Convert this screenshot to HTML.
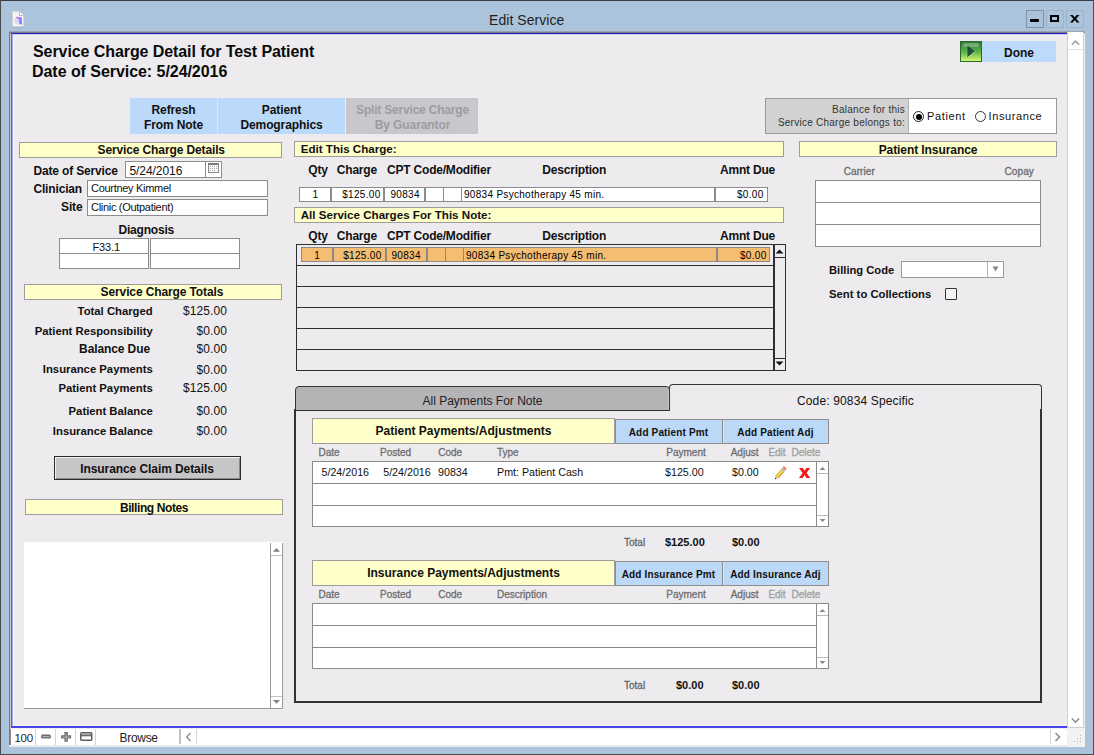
<!DOCTYPE html>
<html><head><meta charset="utf-8">
<style>
*{margin:0;padding:0;box-sizing:border-box}
html,body{width:1094px;height:755px;overflow:hidden;background:#abc4dc;font-family:"Liberation Sans",sans-serif;color:#000;position:relative}
.a{position:absolute}
.t{position:absolute;white-space:nowrap;line-height:1}
svg{position:absolute;overflow:visible}
</style></head><body>
<div class="a" style="left:0px;top:0px;width:1094px;height:1px;background:#3c3c3c"></div>
<div class="a" style="left:0px;top:0px;width:1px;height:755px;background:#4a4a4a"></div>
<div class="a" style="left:1093px;top:0px;width:1px;height:755px;background:#4a4a4a"></div>
<div class="a" style="left:0px;top:754px;width:1094px;height:1px;background:#4a4a4a"></div>
<svg style="left:12px;top:11px" width="12" height="17" viewBox="0 0 12 17"><rect x="0" y="15.2" width="12" height="1.3" fill="#8090a0" opacity="0.55"/><path d="M0.5 0.5 H7.5 L11.5 4.5 V15.5 H0.5 Z" fill="#f3f3f3" stroke="#d4d4d4"/><path d="M7.5 0.5 V4.5 H11.5" fill="#ffffff" stroke="#b8b8b8"/><path d="M4 5.8 L9.8 6.5 L9.9 9.5 L5 9 Z" fill="#b46cf2"/><path d="M5 9 L9.9 9.5 L10 13.5 L6 13 Z" fill="#7a80f4"/><path d="M1.8 7 L6.5 7.8 L7.8 13.4 L3.2 12.8 Z" fill="#d8dcf8"/></svg>
<div class="t" style="top:13.15px;font-size:14px;color:#1e1e1e;letter-spacing:0.05px;left:489px;">Edit Service</div>
<div class="a" style="left:1026px;top:10px;width:18px;height:18px;border:1px solid #7f93a8;background:#a9c2da"></div>
<div class="a" style="left:1046px;top:10px;width:18px;height:18px;border:1px solid #9db3c9;background:#abc4dc"></div>
<div class="a" style="left:1066px;top:10px;width:18px;height:18px;border:1px solid #9db3c9;background:#abc4dc"></div>
<div class="a" style="left:1030px;top:19.3px;width:9px;height:2.8px;background:#000;border-radius:1px"></div>
<div class="a" style="left:1050px;top:15px;width:9px;height:7px;border:2px solid #000"></div>
<svg style="left:1069.5px;top:15px" width="9.5" height="7.5" viewBox="0 0 9.5 7.5"><path d="M0 0 H2.7 L4.75 2.3 L6.8 0 H9.5 L6.1 3.7 L9.5 7.5 H6.8 L4.75 5.1 L2.7 7.5 H0 L3.4 3.7 Z" fill="#000"/></svg>
<div class="a" style="left:9px;top:31px;width:1076px;height:716px;background:#f0f0f0;border-top:1px solid #9aa4ae"></div>
<div class="a" style="left:9px;top:32px;width:1076px;height:1px;background:#787878"></div>
<div class="a" style="left:9px;top:32px;width:1px;height:714px;background:#7a7a7a"></div>
<div class="a" style="left:10px;top:33px;width:1px;height:695px;background:#c8c8c8"></div>
<div class="a" style="left:11px;top:33px;width:1056px;height:695px;background:#edebee"></div>
<div class="a" style="left:11px;top:33px;width:1056px;height:1px;background:#2626c8"></div>
<div class="a" style="left:12px;top:34px;width:1055px;height:1px;background:#c4c4f0"></div>
<div class="a" style="left:13px;top:35px;width:1054px;height:1px;background:#f8f5ee"></div>
<div class="a" style="left:11px;top:34px;width:1px;height:693px;background:#5a5aff"></div>
<div class="a" style="left:12px;top:35px;width:1px;height:691px;background:#a8a8fa"></div>
<div class="a" style="left:13px;top:35px;width:1px;height:690px;background:#f8f5ee"></div>
<div class="a" style="left:13px;top:725px;width:1054px;height:1px;background:#f6f3ec"></div>
<div class="a" style="left:11px;top:726px;width:1056px;height:1.6px;background:#4444ea"></div>
<div class="a" style="left:1067px;top:32px;width:17px;height:696px;background:#fff;border-left:1px solid #cfcfcf;border-right:1px solid #cfcfcf;border-bottom:1px solid #cfcfcf"></div>
<div class="a" style="left:1068px;top:49px;width:15px;height:1px;background:#e2e2e2"></div>
<svg style="left:1071px;top:39px" width="9" height="7" viewBox="0 0 9 7"><path d="M0.8 5.8 L4.5 2 L8.2 5.8" fill="none" stroke="#9a9a9a" stroke-width="1.4"/></svg>
<svg style="left:1071px;top:716.5px" width="9" height="7" viewBox="0 0 9 7"><path d="M0.8 1.5 L4.5 5.3 L8.2 1.5" fill="none" stroke="#8a8a8a" stroke-width="1.4"/></svg>
<div class="a" style="left:10px;top:728.5px;width:1057px;height:16.5px;background:#fff;border-left:1px solid #8a8a8a"></div>
<div class="a" style="left:9px;top:745px;width:1076px;height:2px;background:#e8eaec"></div>
<div class="t" style="top:733.27px;font-size:11.5px;color:#222;letter-spacing:-0.3px;left:14.5px;">100</div>
<div class="a" style="left:35px;top:728.5px;width:1.2px;height:16px;background:#d4d4d4"></div>
<div class="a" style="left:55px;top:728.5px;width:1.2px;height:16px;background:#d4d4d4"></div>
<div class="a" style="left:75px;top:728.5px;width:1.2px;height:16px;background:#d4d4d4"></div>
<div class="a" style="left:95px;top:728.5px;width:1.2px;height:16px;background:#d4d4d4"></div>
<svg style="left:41px;top:734px" width="10" height="5" viewBox="0 0 10 5"><rect x="0.2" y="0.6" width="9.6" height="4" rx="1.4" fill="#6e6e6e"/><rect x="1.8" y="2" width="6.4" height="1.1" fill="#b4b4b4"/></svg>
<svg style="left:61px;top:732px" width="11" height="10" viewBox="0 0 11 10"><path d="M3.4 0 H6.8 V3.2 H10.1 V6.6 H6.8 V9.8 H3.4 V6.6 H0.1 V3.2 H3.4 Z" fill="#6e6e6e"/><path d="M4.6 1.4 H5.6 V4.4 H8.7 V5.4 H5.6 V8.4 H4.6 V5.4 H1.5 V4.4 H4.6 Z" fill="#b0b0b0"/></svg>
<svg style="left:80px;top:732px" width="12.5" height="9" viewBox="0 0 12.5 9"><rect x="0.75" y="0.75" width="11" height="7.5" rx="1" fill="#fff" stroke="#5c5c5c" stroke-width="1.5"/><rect x="1.5" y="1.5" width="9.5" height="1.6" fill="#9a9a9a"/><rect x="1" y="3.1" width="10.5" height="1.2" fill="#5c5c5c"/></svg>
<div class="t" style="top:731.84px;font-size:12px;color:#222;letter-spacing:-0.3px;left:119.5px;">Browse</div>
<div class="a" style="left:179px;top:729px;width:2px;height:15px;background:#c0c0c0"></div>
<svg style="left:185px;top:732px" width="7" height="10" viewBox="0 0 7 10"><path d="M5.5 1 L1.7 5 L5.5 9" fill="none" stroke="#8a8a8a" stroke-width="1.3"/></svg>
<div class="a" style="left:196px;top:729px;width:1px;height:15px;background:#d6d6d6"></div>
<div class="a" style="left:1050px;top:729px;width:1px;height:15px;background:#d6d6d6"></div>
<svg style="left:1054px;top:732px" width="8" height="10" viewBox="0 0 8 10"><path d="M1.5 1 L5.5 5 L1.5 9" fill="none" stroke="#8a8a8a" stroke-width="1.5"/></svg>
<div class="a" style="left:1067px;top:728px;width:18px;height:19px;background:#f2f2f2"></div>
<div class="a" style="left:1080px;top:735px;width:1.2px;height:1.2px;background:#b4b4b4"></div>
<div class="a" style="left:1077px;top:738px;width:1.2px;height:1.2px;background:#b4b4b4"></div>
<div class="a" style="left:1080px;top:738px;width:1.2px;height:1.2px;background:#b4b4b4"></div>
<div class="a" style="left:1074px;top:741px;width:1.2px;height:1.2px;background:#b4b4b4"></div>
<div class="a" style="left:1077px;top:741px;width:1.2px;height:1.2px;background:#b4b4b4"></div>
<div class="a" style="left:1080px;top:741px;width:1.2px;height:1.2px;background:#b4b4b4"></div>
<div class="t" style="top:44.46px;font-size:16px;color:#0a0a0a;font-weight:bold;letter-spacing:-0.08px;left:33px;">Service Charge Detail for Test Patient</div>
<div class="t" style="top:64.46px;font-size:16px;color:#0a0a0a;font-weight:bold;letter-spacing:-0.05px;left:32px;">Date of Service: 5/24/2016</div>
<div class="a" style="left:960px;top:41px;width:22px;height:21px;background:linear-gradient(#2a7a36,#62b848 55%,#d8f870);border:1px solid #2a6a30"></div>
<div class="a" style="left:963px;top:43px;width:16px;height:4px;background:#fff;opacity:0.3;border-radius:2px"></div>
<svg style="left:960px;top:41px" width="22" height="21" viewBox="0 0 22 21"><path d="M7.5 4.5 L15 10.5 L7.5 16.5 Z" fill="#1f4d3e"/><path d="M7.8 16.3 L15 10.7" stroke="#e8ffe0" stroke-width="0.8" opacity="0.8"/></svg>
<div class="a" style="left:982px;top:41px;width:74px;height:21px;background:#bcdaf9"></div>
<div class="t" style="top:46.84px;font-size:12px;color:#111;font-weight:bold;left:719px;width:600px;text-align:center;">Done</div>
<div class="a" style="left:130px;top:98px;width:87px;height:36px;background:#bbd9f8"></div>
<div class="a" style="left:217px;top:98px;width:1px;height:36px;background:#dde8f2"></div>
<div class="a" style="left:218px;top:98px;width:127px;height:36px;background:#bbd9f8"></div>
<div class="a" style="left:346px;top:98px;width:132px;height:36px;background:#c9c7cb"></div>
<div class="t" style="top:104.14px;font-size:12px;color:#111;font-weight:bold;letter-spacing:-0.1px;left:-126.5px;width:600px;text-align:center;">Refresh</div>
<div class="t" style="top:118.74px;font-size:12px;color:#111;font-weight:bold;letter-spacing:-0.1px;left:-126.5px;width:600px;text-align:center;">From Note</div>
<div class="t" style="top:104.14px;font-size:12px;color:#111;font-weight:bold;letter-spacing:-0.1px;left:-18.5px;width:600px;text-align:center;">Patient</div>
<div class="t" style="top:118.74px;font-size:12px;color:#111;font-weight:bold;letter-spacing:-0.1px;left:-18.5px;width:600px;text-align:center;">Demographics</div>
<div class="t" style="top:104.14px;font-size:12px;color:#9d9ca3;font-weight:bold;letter-spacing:-0.2px;left:112.5px;width:600px;text-align:center;">Split Service Charge</div>
<div class="t" style="top:118.74px;font-size:12px;color:#9d9ca3;font-weight:bold;letter-spacing:-0.1px;left:112.5px;width:600px;text-align:center;">By Guarantor</div>
<div class="a" style="left:765px;top:98px;width:292px;height:36px;background:#fff;border:1px solid #9a9a9a"></div>
<div class="a" style="left:766px;top:99px;width:143px;height:34px;background:#d2d2d2;border-right:1px solid #b0b0b0"></div>
<div class="t" style="top:105.03px;font-size:10px;color:#333;letter-spacing:0.25px;right:189px;">Balance for this</div>
<div class="t" style="top:118.03px;font-size:10px;color:#333;letter-spacing:0.25px;right:189px;">Service Charge belongs to:</div>
<div class="a" style="left:913px;top:111px;width:11px;height:11px;border:1px solid #222;border-radius:50%;background:#fff"></div>
<div class="a" style="left:915.5px;top:113.5px;width:6px;height:6px;border-radius:50%;background:#000"></div>
<div class="t" style="top:111.19px;font-size:11px;color:#111;letter-spacing:0.65px;left:927px;">Patient</div>
<div class="a" style="left:975px;top:111px;width:11px;height:11px;border:1px solid #333;border-radius:50%;background:#fff"></div>
<div class="t" style="top:111.19px;font-size:11px;color:#111;letter-spacing:0.6px;left:988.6px;">Insurance</div>
<div class="a" style="left:19px;top:142px;width:263px;height:16px;background:#ffffc9;border:1px solid #9d9d9d;"></div>
<div class="t" style="top:144.44px;font-size:12px;color:#111;font-weight:bold;letter-spacing:-0.12px;left:97.5px;">Service Charge Details</div>
<div class="t" style="top:164.84px;font-size:12px;color:#111;font-weight:bold;letter-spacing:-0.15px;left:33.4px;">Date of Service</div>
<div class="a" style="left:125px;top:161px;width:81px;height:17px;background:#fff;border:1px solid #8c8c8c"></div>
<div class="t" style="top:164.84px;font-size:12px;color:#111;letter-spacing:-0.05px;left:129.4px;">5/24/2016</div>
<div class="a" style="left:205px;top:161px;width:17px;height:17px;background:#fff;border:1px solid #8c8c8c"></div>
<svg style="left:208px;top:163px" width="11" height="10" viewBox="0 0 11 10"><rect x="0.5" y="0.5" width="10" height="9" fill="#f8f8f8" stroke="#8a8a8a"/><rect x="0" y="0" width="11" height="2" fill="#7a7a7a"/><rect x="2" y="3" width="1" height="1" fill="#a8a8a8"/><rect x="4" y="3" width="1" height="1" fill="#a8a8a8"/><rect x="6" y="3" width="1" height="1" fill="#a8a8a8"/><rect x="8" y="3" width="1" height="1" fill="#a8a8a8"/><rect x="2" y="5" width="1" height="1" fill="#a8a8a8"/><rect x="4" y="5" width="1" height="1" fill="#a8a8a8"/><rect x="6" y="5" width="1" height="1" fill="#a8a8a8"/><rect x="8" y="5" width="1" height="1" fill="#a8a8a8"/><rect x="2" y="7" width="1" height="1" fill="#a8a8a8"/><rect x="4" y="7" width="1" height="1" fill="#a8a8a8"/><rect x="6" y="7" width="1" height="1" fill="#a8a8a8"/></svg>
<div class="t" style="top:182.84px;font-size:12px;color:#111;font-weight:bold;letter-spacing:-0.15px;left:33.4px;">Clinician</div>
<div class="a" style="left:87px;top:180px;width:181px;height:17px;background:#fff;border:1px solid #8c8c8c"></div>
<div class="t" style="top:183.19px;font-size:11px;color:#111;letter-spacing:-0.3px;left:91px;">Courtney Kimmel</div>
<div class="t" style="top:201.34px;font-size:12px;color:#111;font-weight:bold;letter-spacing:-0.15px;right:1011.5px;">Site</div>
<div class="a" style="left:87px;top:199px;width:181px;height:17px;background:#fff;border:1px solid #8c8c8c"></div>
<div class="t" style="top:202.19px;font-size:11px;color:#111;letter-spacing:-0.3px;left:91px;">Clinic (Outpatient)</div>
<div class="t" style="top:224.34px;font-size:12px;color:#111;font-weight:bold;letter-spacing:-0.2px;left:118.5px;">Diagnosis</div>
<div class="a" style="left:59px;top:238px;width:90px;height:16px;background:#fff;border:1px solid #8c8c8c"></div>
<div class="a" style="left:150px;top:238px;width:90px;height:16px;background:#fff;border:1px solid #8c8c8c"></div>
<div class="a" style="left:59px;top:253px;width:90px;height:16px;background:#fff;border:1px solid #8c8c8c"></div>
<div class="a" style="left:150px;top:253px;width:90px;height:16px;background:#fff;border:1px solid #8c8c8c"></div>
<div class="t" style="top:241.69px;font-size:11px;color:#111;letter-spacing:-0.1px;left:92.4px;">F33.1</div>
<div class="a" style="left:24px;top:284px;width:258px;height:16px;background:#ffffc9;border:1px solid #9d9d9d;"></div>
<div class="t" style="top:286.34px;font-size:12px;color:#111;font-weight:bold;letter-spacing:-0.12px;left:100.6px;">Service Charge Totals</div>
<div class="t" style="top:305.93px;font-size:11.3px;color:#111;font-weight:bold;right:941.3px;">Total Charged</div>
<div class="t" style="top:305.34px;font-size:12px;color:#111;letter-spacing:0.1px;right:867px;">$125.00</div>
<div class="t" style="top:325.73px;font-size:11.3px;color:#111;font-weight:bold;right:941.3px;">Patient Responsibility</div>
<div class="t" style="top:325.14px;font-size:12px;color:#111;letter-spacing:0.1px;right:867px;">$0.00</div>
<div class="t" style="top:343.44px;font-size:12px;color:#111;font-weight:bold;letter-spacing:-0.1px;right:944px;">Balance Due</div>
<div class="t" style="top:343.44px;font-size:12px;color:#111;letter-spacing:0.1px;right:867px;">$0.00</div>
<div class="t" style="top:364.43px;font-size:11.3px;color:#111;font-weight:bold;right:941.3px;">Insurance Payments</div>
<div class="t" style="top:363.84px;font-size:12px;color:#111;letter-spacing:0.1px;right:867px;">$0.00</div>
<div class="t" style="top:382.93px;font-size:11.3px;color:#111;font-weight:bold;right:941.3px;">Patient Payments</div>
<div class="t" style="top:382.34px;font-size:12px;color:#111;letter-spacing:0.1px;right:867px;">$125.00</div>
<div class="t" style="top:405.73px;font-size:11.3px;color:#111;font-weight:bold;right:941.3px;">Patient Balance</div>
<div class="t" style="top:405.14px;font-size:12px;color:#111;letter-spacing:0.1px;right:867px;">$0.00</div>
<div class="t" style="top:425.63px;font-size:11.3px;color:#111;font-weight:bold;right:941.3px;">Insurance Balance</div>
<div class="t" style="top:425.04px;font-size:12px;color:#111;letter-spacing:0.1px;right:867px;">$0.00</div>
<div class="a" style="left:54px;top:456px;width:187px;height:24px;background:#c6c5c7;border:1px solid #2a2a2a;box-shadow:inset 1px 1px 0 #f4f4f4, inset -1px -1px 0 #8a8a8a"></div>
<div class="t" style="top:462.84px;font-size:12px;color:#111;font-weight:bold;letter-spacing:-0.08px;left:-153px;width:600px;text-align:center;">Insurance Claim Details</div>
<div class="a" style="left:25px;top:499px;width:258px;height:16px;background:#ffffc9;border:1px solid #9d9d9d;"></div>
<div class="t" style="top:501.64px;font-size:12px;color:#111;font-weight:bold;letter-spacing:-0.4px;left:-146.0px;width:600px;text-align:center;">Billing Notes</div>
<div class="a" style="left:24px;top:542px;width:259px;height:167px;background:#fff;border-bottom:1px solid #9a9a9a"></div>
<div class="a" style="left:270px;top:543px;width:1px;height:166px;background:#9a9a9a"></div>
<div class="a" style="left:282px;top:543px;width:1px;height:166px;background:#9a9a9a"></div>
<div class="a" style="left:271px;top:555px;width:11px;height:1px;background:#c0c0c0"></div>
<div class="a" style="left:271px;top:696px;width:11px;height:1px;background:#c0c0c0"></div>
<svg style="left:273px;top:548px" width="7" height="4" viewBox="0 0 7 4"><path d="M0 3.8 L3.5 0 L7 3.8 Z" fill="#808080"/></svg>
<svg style="left:273px;top:700px" width="7" height="4" viewBox="0 0 7 4"><path d="M0 0 L3.5 3.8 L7 0 Z" fill="#808080"/></svg>
<div class="a" style="left:294px;top:141px;width:490px;height:16px;background:#ffffc9;border:1px solid #9d9d9d;"></div>
<div class="t" style="top:143.18px;font-size:11.6px;color:#111;font-weight:bold;left:300.7px;">Edit This Charge:</div>
<div class="t" style="top:163.64px;font-size:12px;color:#111;font-weight:bold;letter-spacing:-0.2px;left:308.3px;">Qty</div>
<div class="t" style="top:163.64px;font-size:12px;color:#111;font-weight:bold;letter-spacing:-0.2px;left:336.8px;">Charge</div>
<div class="t" style="top:163.64px;font-size:12px;color:#111;font-weight:bold;letter-spacing:-0.2px;left:387px;">CPT Code/Modifier</div>
<div class="t" style="top:163.64px;font-size:12px;color:#111;font-weight:bold;letter-spacing:-0.2px;left:542.3px;">Description</div>
<div class="t" style="top:163.64px;font-size:12px;color:#111;font-weight:bold;letter-spacing:-0.2px;left:720px;">Amnt Due</div>
<div class="a" style="left:299px;top:187px;width:32px;height:15px;background:#fff;border:1px solid #8c8c8c"></div>
<div class="a" style="left:331px;top:187px;width:53px;height:15px;background:#fff;border:1px solid #8c8c8c"></div>
<div class="a" style="left:384px;top:187px;width:41px;height:15px;background:#fff;border:1px solid #8c8c8c"></div>
<div class="a" style="left:425px;top:187px;width:19px;height:15px;background:#fff;border:1px solid #8c8c8c"></div>
<div class="a" style="left:443px;top:187px;width:19px;height:15px;background:#fff;border:1px solid #8c8c8c"></div>
<div class="a" style="left:461px;top:187px;width:254px;height:15px;background:#fff;border:1px solid #8c8c8c"></div>
<div class="a" style="left:715px;top:187px;width:53px;height:15px;background:#fff;border:1px solid #8c8c8c"></div>
<div class="t" style="top:190.34px;font-size:10px;color:#000;left:15.199999999999989px;width:600px;text-align:center;">1</div>
<div class="t" style="top:190.34px;font-size:10px;color:#000;letter-spacing:0.3px;right:713.5px;">$125.00</div>
<div class="t" style="top:190.34px;font-size:10px;color:#000;letter-spacing:0.3px;left:390.5px;">90834</div>
<div class="t" style="top:190.34px;font-size:10px;color:#000;letter-spacing:0.3px;left:464px;">90834 Psychotherapy 45 min.</div>
<div class="t" style="top:190.34px;font-size:10px;color:#000;letter-spacing:0.3px;right:330.5px;">$0.00</div>
<div class="a" style="left:294px;top:207px;width:490px;height:16px;background:#ffffc9;border:1px solid #9d9d9d;"></div>
<div class="t" style="top:209.48px;font-size:11.6px;color:#111;font-weight:bold;left:300.7px;">All Service Charges For This Note:</div>
<div class="t" style="top:229.54px;font-size:12px;color:#111;font-weight:bold;letter-spacing:-0.2px;left:308.3px;">Qty</div>
<div class="t" style="top:229.54px;font-size:12px;color:#111;font-weight:bold;letter-spacing:-0.2px;left:336.8px;">Charge</div>
<div class="t" style="top:229.54px;font-size:12px;color:#111;font-weight:bold;letter-spacing:-0.2px;left:387px;">CPT Code/Modifier</div>
<div class="t" style="top:229.54px;font-size:12px;color:#111;font-weight:bold;letter-spacing:-0.2px;left:542.3px;">Description</div>
<div class="t" style="top:229.54px;font-size:12px;color:#111;font-weight:bold;letter-spacing:-0.2px;left:720px;">Amnt Due</div>
<div class="a" style="left:296px;top:243.5px;width:490px;height:127.5px;border:1.5px solid #2f2f2f"></div>
<div class="a" style="left:297px;top:264.5px;width:477px;height:1.5px;background:#2f2f2f"></div>
<div class="a" style="left:297px;top:285.5px;width:477px;height:1.5px;background:#2f2f2f"></div>
<div class="a" style="left:297px;top:306.5px;width:477px;height:1.5px;background:#2f2f2f"></div>
<div class="a" style="left:297px;top:327.5px;width:477px;height:1.5px;background:#2f2f2f"></div>
<div class="a" style="left:297px;top:348.5px;width:477px;height:1.5px;background:#2f2f2f"></div>
<div class="a" style="left:773px;top:244px;width:1.5px;height:127px;background:#2f2f2f"></div>
<div class="a" style="left:774px;top:256.5px;width:11px;height:1.2px;background:#2f2f2f"></div>
<div class="a" style="left:774px;top:358px;width:11px;height:1.2px;background:#2f2f2f"></div>
<svg style="left:775px;top:249px" width="9" height="5" viewBox="0 0 9 5"><path d="M0.5 4.5 L4.5 0.5 L8.5 4.5 Z" fill="#111"/></svg>
<svg style="left:775px;top:361px" width="9" height="5" viewBox="0 0 9 5"><path d="M0.5 0.5 L4.5 4.5 L8.5 0.5 Z" fill="#111"/></svg>
<div class="a" style="left:301px;top:247px;width:32px;height:15px;background:#f5bd72;border:1px solid #8a8a8a"></div>
<div class="a" style="left:333px;top:247px;width:53px;height:15px;background:#f5bd72;border:1px solid #8a8a8a"></div>
<div class="a" style="left:386px;top:247px;width:41px;height:15px;background:#f5bd72;border:1px solid #8a8a8a"></div>
<div class="a" style="left:427px;top:247px;width:19px;height:15px;background:#f5bd72;border:1px solid #8a8a8a"></div>
<div class="a" style="left:445px;top:247px;width:19px;height:15px;background:#f5bd72;border:1px solid #8a8a8a"></div>
<div class="a" style="left:463px;top:247px;width:254px;height:15px;background:#f5bd72;border:1px solid #8a8a8a"></div>
<div class="a" style="left:717px;top:247px;width:53px;height:15px;background:#f5bd72;border:1px solid #8a8a8a"></div>
<div class="t" style="top:250.84px;font-size:10px;color:#000;left:17px;width:600px;text-align:center;">1</div>
<div class="t" style="top:250.84px;font-size:10px;color:#000;letter-spacing:0.3px;right:712.5px;">$125.00</div>
<div class="t" style="top:250.84px;font-size:10px;color:#000;letter-spacing:0.3px;left:391.5px;">90834</div>
<div class="t" style="top:250.84px;font-size:10px;color:#000;letter-spacing:0.3px;left:466px;">90834 Psychotherapy 45 min.</div>
<div class="t" style="top:250.84px;font-size:10px;color:#000;letter-spacing:0.3px;right:327.5px;">$0.00</div>
<div class="a" style="left:294px;top:409px;width:748px;height:294px;border:2px solid #333;border-top:none"></div>
<div class="a" style="left:294px;top:409px;width:376px;height:2px;background:#333"></div>
<div class="a" style="left:294.5px;top:386px;width:375.5px;height:25px;background:#b4b3b5;border:1.5px solid #333;border-bottom:1.5px solid #333;border-radius:4px 4px 0 0;box-shadow:inset -1px 0 0 #cacaca"></div>
<div class="a" style="left:668.5px;top:384px;width:373.5px;height:26.5px;border-top:1.2px solid #333;border-left:1.2px solid #333;border-right:1.2px solid #333;border-radius:4px 4px 0 0"></div>
<div class="t" style="top:394.84px;font-size:12px;color:#222;left:182.5px;width:600px;text-align:center;">All Payments For Note</div>
<div class="t" style="top:395.34px;font-size:12px;color:#111;letter-spacing:0.14px;left:797px;">Code: 90834 Specific</div>
<div class="a" style="left:312px;top:418px;width:303px;height:26px;background:#ffffc9;border:1px solid #9d9d9d;"></div>
<div class="t" style="top:425.04px;font-size:12px;color:#111;font-weight:bold;left:163.5px;width:600px;text-align:center;">Patient Payments/Adjustments</div>
<div class="a" style="left:614.5px;top:419px;width:108px;height:24.5px;background:#bbd8f6;border:1px solid #8e8e8e;border-left-width:1.5px;border-right-width:1.5px;border-bottom-width:1.5px"></div>
<div class="a" style="left:722px;top:419px;width:107px;height:24.5px;background:#bbd8f6;border:1px solid #8e8e8e;border-bottom-width:1.5px;box-shadow:inset 1px 0 0 #d4e6f8"></div>
<div class="t" style="top:427.84px;font-size:10px;color:#111;font-weight:bold;letter-spacing:0.15px;left:368.5px;width:600px;text-align:center;">Add Patient Pmt</div>
<div class="t" style="top:427.84px;font-size:10px;color:#111;font-weight:bold;letter-spacing:0.15px;left:475.5px;width:600px;text-align:center;">Add Patient Adj</div>
<div class="t" style="top:447.54px;font-size:10px;color:#6e6e6e;left:318.5px;-webkit-text-stroke:0.3px #6e6e6e;">Date</div>
<div class="t" style="top:447.54px;font-size:10px;color:#6e6e6e;left:380px;-webkit-text-stroke:0.3px #6e6e6e;">Posted</div>
<div class="t" style="top:447.54px;font-size:10px;color:#6e6e6e;left:438.2px;-webkit-text-stroke:0.3px #6e6e6e;">Code</div>
<div class="t" style="top:447.54px;font-size:10px;color:#6e6e6e;left:497px;-webkit-text-stroke:0.3px #6e6e6e;">Type</div>
<div class="t" style="top:447.54px;font-size:10px;color:#6e6e6e;left:666.3px;-webkit-text-stroke:0.3px #6e6e6e;">Payment</div>
<div class="t" style="top:447.54px;font-size:10px;color:#6e6e6e;left:730.7px;-webkit-text-stroke:0.3px #6e6e6e;">Adjust</div>
<div class="t" style="top:447.54px;font-size:10px;color:#a0a0a0;left:768.4px;-webkit-text-stroke:0.3px #a0a0a0;">Edit</div>
<div class="t" style="top:447.54px;font-size:10px;color:#a0a0a0;left:791.5px;-webkit-text-stroke:0.3px #a0a0a0;">Delete</div>
<div class="a" style="left:312px;top:461px;width:517px;height:66px;background:#fff;border:1px solid #8a8a8a"></div>
<div class="a" style="left:313px;top:482.5px;width:503px;height:1px;background:#8a8a8a"></div>
<div class="a" style="left:313px;top:504.5px;width:503px;height:1px;background:#8a8a8a"></div>
<div class="a" style="left:816px;top:461px;width:1px;height:66px;background:#8a8a8a"></div>
<div class="a" style="left:817px;top:473px;width:11px;height:1px;background:#b8b8b8"></div>
<div class="a" style="left:817px;top:515px;width:11px;height:1px;background:#b8b8b8"></div>
<svg style="left:819px;top:465.5px" width="7" height="5" viewBox="0 0 7 5"><path d="M0.5 4 L3.5 1 L6.5 4 Z" fill="#888"/></svg>
<svg style="left:819px;top:518px" width="7" height="5" viewBox="0 0 7 5"><path d="M0.5 1 L3.5 4 L6.5 1 Z" fill="#888"/></svg>
<div class="t" style="top:537.53px;font-size:10px;color:#666;left:624px;-webkit-text-stroke:0.3px #666;">Total</div>
<div class="t" style="top:536.69px;font-size:11px;color:#111;font-weight:bold;left:665px;">$125.00</div>
<div class="t" style="top:536.69px;font-size:11px;color:#111;font-weight:bold;left:732px;">$0.00</div>
<div class="t" style="top:467.24px;font-size:10.7px;color:#111;left:321.5px;">5/24/2016</div>
<div class="t" style="top:467.24px;font-size:10.7px;color:#111;left:383.2px;">5/24/2016</div>
<div class="t" style="top:467.24px;font-size:10.7px;color:#111;left:438px;">90834</div>
<div class="t" style="top:467.24px;font-size:10.7px;color:#111;left:497px;">Pmt: Patient Cash</div>
<div class="t" style="top:467.24px;font-size:10.7px;color:#111;left:665px;">$125.00</div>
<div class="t" style="top:467.24px;font-size:10.7px;color:#111;left:732px;">$0.00</div>
<svg style="left:773px;top:465px" width="15" height="16" viewBox="0 0 15 16"><g transform="translate(2,14.2) rotate(-49)"><path d="M0 0 L3.2 -2 L3.2 2 Z" fill="#e0b878"/><path d="M0 0 L1.3 -0.8 L1.3 0.8 Z" fill="#111"/><rect x="3.2" y="-2.1" width="8.3" height="4.2" fill="#e8c440"/><rect x="3.2" y="-0.5" width="8.3" height="0.9" fill="#f4dc80"/><path d="M3.2 1.7 H11.5" stroke="#b88a28" stroke-width="0.7"/><rect x="11.5" y="-2.1" width="2.2" height="4.2" fill="#b8b8b8"/><rect x="13.7" y="-2.1" width="2" height="4.2" rx="0.8" fill="#f07860"/></g></svg>
<svg style="left:798.5px;top:467.5px" width="12" height="11" viewBox="0 0 12 11"><path d="M0 0 H3.9 L5.6 2.8 L7.4 0 H11.2 L7.6 5 L11.3 10 H7.5 L5.6 7.1 L3.6 10 H-0.1 L3.6 5 Z" fill="#ee1c1c"/></svg>
<div class="a" style="left:312px;top:560px;width:303px;height:26px;background:#ffffc9;border:1px solid #9d9d9d;"></div>
<div class="t" style="top:567.04px;font-size:12px;color:#111;font-weight:bold;left:163.5px;width:600px;text-align:center;">Insurance Payments/Adjustments</div>
<div class="a" style="left:614.5px;top:561px;width:108px;height:24.5px;background:#bbd8f6;border:1px solid #8e8e8e;border-left-width:1.5px;border-right-width:1.5px;border-bottom-width:1.5px"></div>
<div class="a" style="left:722px;top:561px;width:107px;height:24.5px;background:#bbd8f6;border:1px solid #8e8e8e;border-bottom-width:1.5px;box-shadow:inset 1px 0 0 #d4e6f8"></div>
<div class="t" style="top:569.83px;font-size:10px;color:#111;font-weight:bold;letter-spacing:0.15px;left:368.5px;width:600px;text-align:center;">Add Insurance Pmt</div>
<div class="t" style="top:569.83px;font-size:10px;color:#111;font-weight:bold;letter-spacing:0.15px;left:475.5px;width:600px;text-align:center;">Add Insurance Adj</div>
<div class="t" style="top:589.53px;font-size:10px;color:#6e6e6e;left:318.5px;-webkit-text-stroke:0.3px #6e6e6e;">Date</div>
<div class="t" style="top:589.53px;font-size:10px;color:#6e6e6e;left:380px;-webkit-text-stroke:0.3px #6e6e6e;">Posted</div>
<div class="t" style="top:589.53px;font-size:10px;color:#6e6e6e;left:438.2px;-webkit-text-stroke:0.3px #6e6e6e;">Code</div>
<div class="t" style="top:589.53px;font-size:10px;color:#6e6e6e;left:497px;-webkit-text-stroke:0.3px #6e6e6e;">Description</div>
<div class="t" style="top:589.53px;font-size:10px;color:#6e6e6e;left:666.3px;-webkit-text-stroke:0.3px #6e6e6e;">Payment</div>
<div class="t" style="top:589.53px;font-size:10px;color:#6e6e6e;left:730.7px;-webkit-text-stroke:0.3px #6e6e6e;">Adjust</div>
<div class="t" style="top:589.53px;font-size:10px;color:#a0a0a0;left:768.4px;-webkit-text-stroke:0.3px #a0a0a0;">Edit</div>
<div class="t" style="top:589.53px;font-size:10px;color:#a0a0a0;left:791.5px;-webkit-text-stroke:0.3px #a0a0a0;">Delete</div>
<div class="a" style="left:312px;top:603px;width:517px;height:66px;background:#fff;border:1px solid #8a8a8a"></div>
<div class="a" style="left:313px;top:624.5px;width:503px;height:1px;background:#8a8a8a"></div>
<div class="a" style="left:313px;top:646.5px;width:503px;height:1px;background:#8a8a8a"></div>
<div class="a" style="left:816px;top:603px;width:1px;height:66px;background:#8a8a8a"></div>
<div class="a" style="left:817px;top:615px;width:11px;height:1px;background:#b8b8b8"></div>
<div class="a" style="left:817px;top:657px;width:11px;height:1px;background:#b8b8b8"></div>
<svg style="left:819px;top:607.5px" width="7" height="5" viewBox="0 0 7 5"><path d="M0.5 4 L3.5 1 L6.5 4 Z" fill="#888"/></svg>
<svg style="left:819px;top:660px" width="7" height="5" viewBox="0 0 7 5"><path d="M0.5 1 L3.5 4 L6.5 1 Z" fill="#888"/></svg>
<div class="t" style="top:680.53px;font-size:10px;color:#666;left:624px;-webkit-text-stroke:0.3px #666;">Total</div>
<div class="t" style="top:679.69px;font-size:11px;color:#111;font-weight:bold;left:676px;">$0.00</div>
<div class="t" style="top:679.69px;font-size:11px;color:#111;font-weight:bold;left:732px;">$0.00</div>
<div class="a" style="left:799px;top:141px;width:258px;height:16px;background:#ffffc9;border:1px solid #9d9d9d;"></div>
<div class="t" style="top:144.24px;font-size:12px;color:#111;font-weight:bold;letter-spacing:-0.08px;left:628.0px;width:600px;text-align:center;">Patient Insurance</div>
<div class="t" style="top:167.03px;font-size:10px;color:#6a6a6a;letter-spacing:0.1px;left:843.7px;-webkit-text-stroke:0.3px #6a6a6a;">Carrier</div>
<div class="t" style="top:167.03px;font-size:10px;color:#6a6a6a;letter-spacing:0.1px;left:1004.5px;-webkit-text-stroke:0.3px #6a6a6a;">Copay</div>
<div class="a" style="left:815px;top:180px;width:226px;height:23px;background:#fff;border:1px solid #8c8c8c"></div>
<div class="a" style="left:815px;top:202px;width:226px;height:23px;background:#fff;border:1px solid #8c8c8c"></div>
<div class="a" style="left:815px;top:224px;width:226px;height:23px;background:#fff;border:1px solid #8c8c8c"></div>
<div class="t" style="top:264.82px;font-size:11.2px;color:#111;font-weight:bold;left:829px;">Billing Code</div>
<div class="a" style="left:901px;top:261px;width:103px;height:17px;background:#fff;border:1px solid #9a9a9a"></div>
<div class="a" style="left:987px;top:262px;width:1px;height:15px;background:#b0b0b0"></div>
<svg style="left:992px;top:266px" width="7" height="6" viewBox="0 0 7 6"><path d="M0.5 0.5 L6.5 0.5 L3.5 5.5 Z" fill="#888"/></svg>
<div class="t" style="top:288.93px;font-size:11.3px;color:#111;font-weight:bold;left:829px;">Sent to Collections</div>
<div class="a" style="left:945px;top:288.3px;width:12px;height:12px;background:#f4f3f5;border:1.3px solid #333;border-radius:1px"></div>
</body></html>
